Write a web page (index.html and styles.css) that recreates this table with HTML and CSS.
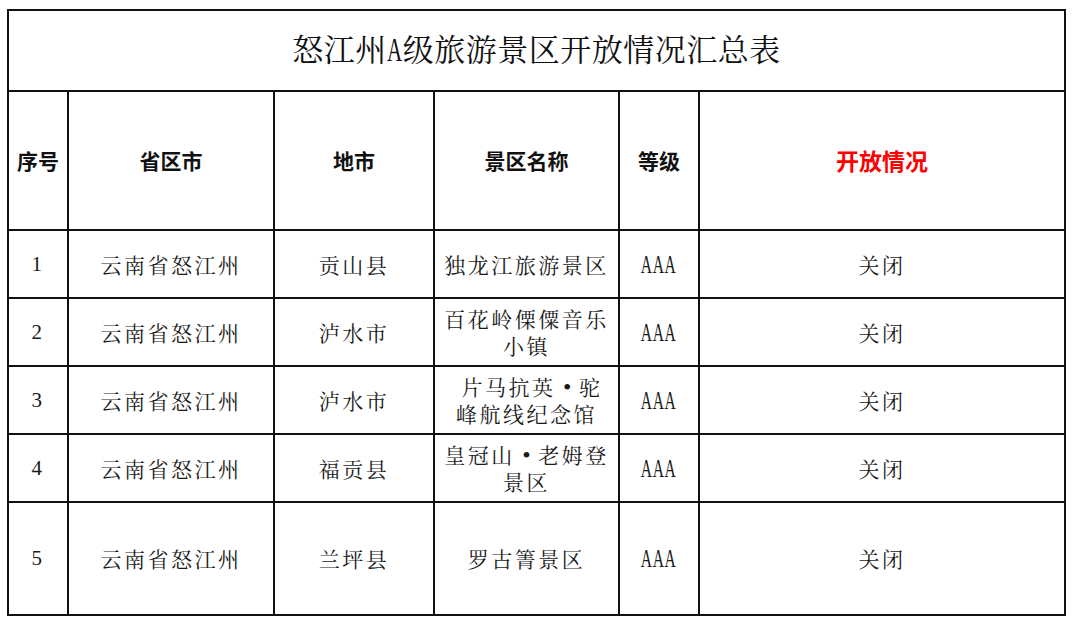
FILE: index.html
```html
<!DOCTYPE html>
<html lang="zh-CN">
<head>
<meta charset="utf-8">
<title>怒江州A级旅游景区开放情况汇总表</title>
<link rel="stylesheet" href="styles.css">
</head>
<body>
<table class="sheet">
  <colgroup>
    <col class="c-no">
    <col class="c-prov">
    <col class="c-city">
    <col class="c-name">
    <col class="c-grade">
    <col class="c-status">
  </colgroup>
  <tr class="r-title">
    <td colspan="6" class="title">怒江州<span class="latin-t">A</span>级旅游景区开放情况汇总表</td>
  </tr>
  <tr class="r-head">
    <th>序号</th>
    <th>省区市</th>
    <th>地市</th>
    <th>景区名称</th>
    <th>等级</th>
    <th class="red">开放情况</th>
  </tr>
  <tr class="r-row">
    <td class="num">1</td>
    <td>云南省怒江州</td>
    <td>贡山县</td>
    <td>独龙江旅游景区</td>
    <td><span class="latin">AAA</span></td>
    <td>关闭</td>
  </tr>
  <tr class="r-row">
    <td class="num">2</td>
    <td>云南省怒江州</td>
    <td>泸水市</td>
    <td><span class="ln">百花岭傈僳音乐</span><span class="ln">小镇</span></td>
    <td><span class="latin">AAA</span></td>
    <td>关闭</td>
  </tr>
  <tr class="r-row">
    <td class="num">3</td>
    <td>云南省怒江州</td>
    <td>泸水市</td>
    <td><span class="ln indent">片马抗英<span class="dot">•</span>驼</span><span class="ln">峰航线纪念馆</span></td>
    <td><span class="latin">AAA</span></td>
    <td>关闭</td>
  </tr>
  <tr class="r-row">
    <td class="num">4</td>
    <td>云南省怒江州</td>
    <td>福贡县</td>
    <td><span class="ln">皇冠山<span class="dot">•</span>老姆登</span><span class="ln">景区</span></td>
    <td><span class="latin">AAA</span></td>
    <td>关闭</td>
  </tr>
  <tr class="r-last">
    <td class="num">5</td>
    <td>云南省怒江州</td>
    <td>兰坪县</td>
    <td>罗古箐景区</td>
    <td><span class="latin">AAA</span></td>
    <td>关闭</td>
  </tr>
</table>
</body>
</html>
```

FILE: styles.css
```css
html, body {
  margin: 0;
  padding: 0;
  background: #ffffff;
}

body {
  padding: 9px 0 0 7px;
}

.sheet {
  border-collapse: collapse;
  table-layout: fixed;
  width: 1057px;
  font-family: "Noto Serif CJK SC", "Noto Sans CJK SC", sans-serif;
  color: #1a1a1a;
}

.c-no { width: 60px; }
.c-prov { width: 206px; }
.c-city { width: 160px; }
.c-name { width: 185px; }
.c-grade { width: 80px; }
.c-status { width: 366px; }

.sheet td,
.sheet th {
  border: 2px solid #111111;
  padding: 0 4px;
  text-align: center;
  vertical-align: middle;
  font-size: 21px;
  font-weight: 400;
  line-height: 27px;
  letter-spacing: 2.5px;
  white-space: nowrap;
}

.sheet th {
  font-family: "Noto Sans CJK SC", sans-serif;
  font-weight: 700;
  letter-spacing: 0;
  color: #111111;
}

.sheet th.red {
  color: #ff0000;
  font-size: 23px;
}

.r-title { height: 81px; }
.r-head { height: 139px; }
.r-row { height: 68px; }
.r-last { height: 113px; }

.sheet td.title {
  font-size: 31px;
  letter-spacing: 0.5px;
  line-height: 40px;
  color: #111111;
  padding-bottom: 3px;
}

.ln {
  display: block;
  height: 27px;
  line-height: 27px;
}

.num {
  font-family: "Liberation Serif", serif;
}

.latin {
  display: inline-block;
  font-family: "Liberation Serif", serif;
  font-size: 25px;
  letter-spacing: 1px;
  transform: scaleX(0.62);
}

.latin-t {
  display: inline-block;
  font-family: "Liberation Serif", serif;
  font-size: 34px;
  letter-spacing: 0;
  width: 16px;
  transform: scaleX(0.62);
  transform-origin: left center;
}

.dot {
  display: inline-block;
  width: 23.5px;
  font-family: "Liberation Serif", serif;
  font-size: 24px;
  letter-spacing: 0;
  text-align: center;
}

.indent {
  padding-left: 11px;
}
```
